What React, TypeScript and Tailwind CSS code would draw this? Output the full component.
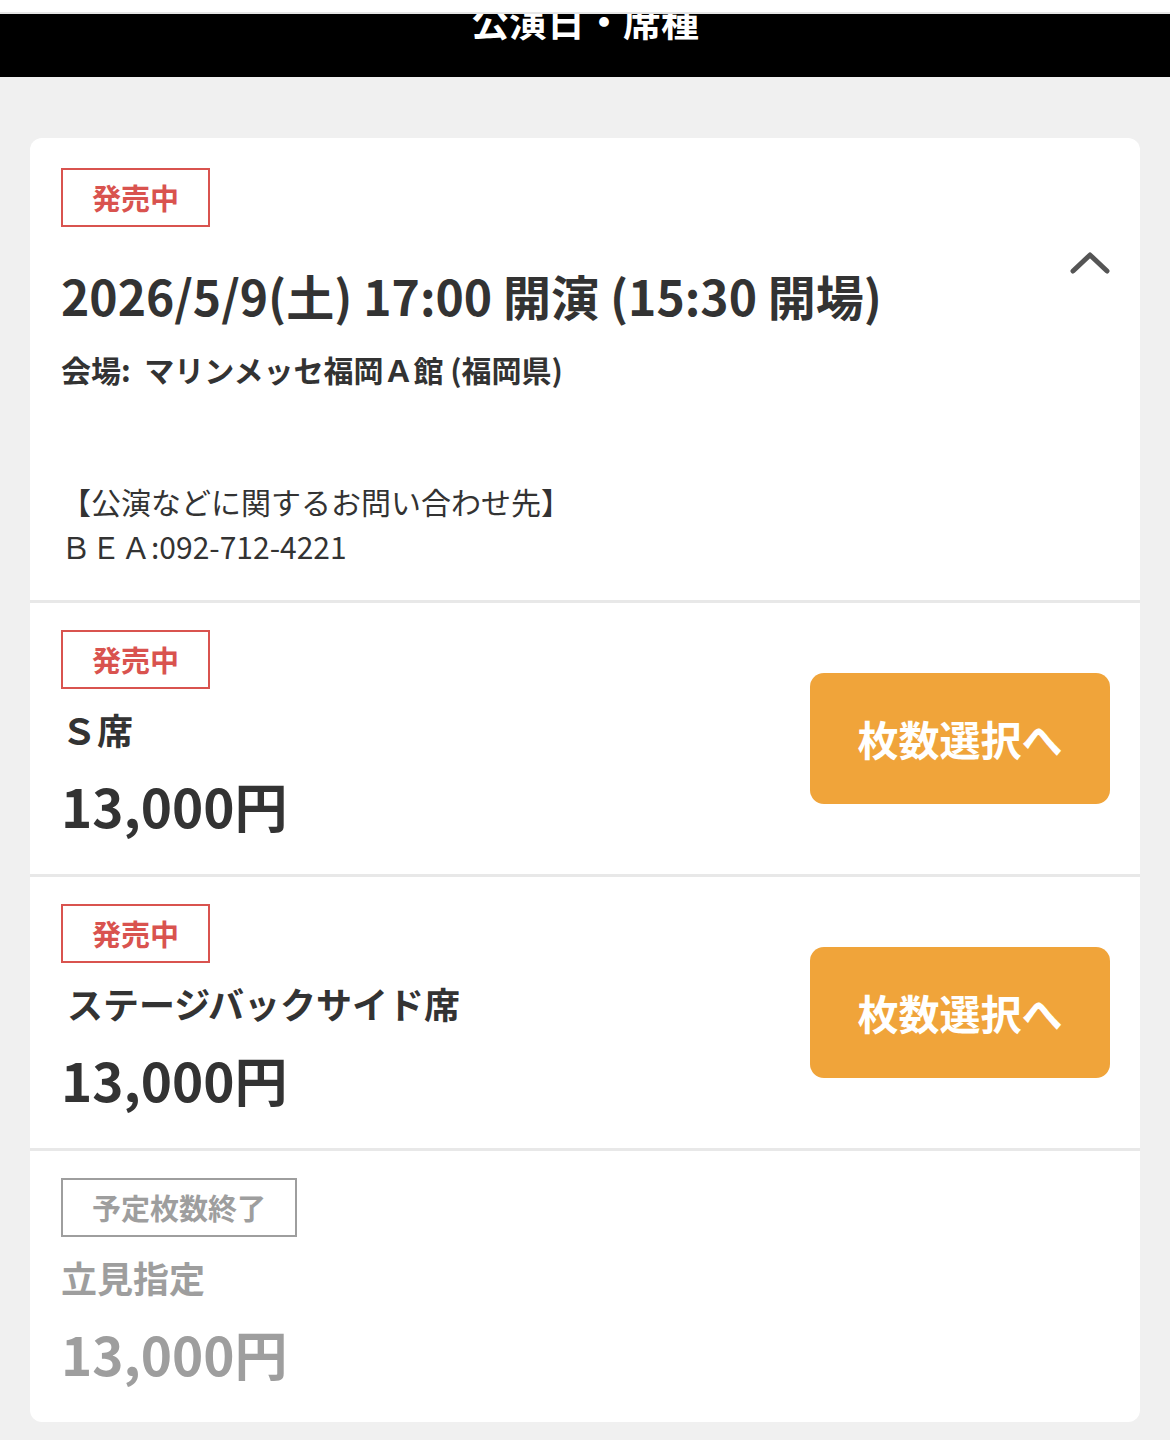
import React from "react"

const font = { fontFamily: '"Noto Sans CJK JP", "Noto Sans", sans-serif' }

function Badge({ label, soldOut }: { label: string; soldOut?: boolean }) {
  return (
    <div
      className={`inline-flex h-[59px] items-center border-2 px-[29px] text-[29px] font-bold leading-none ${
        soldOut ? "border-[#9e9e9e] text-[#9e9e9e]" : "border-[#d9534f] text-[#d9534f]"
      }`}
    >
      {label}
    </div>
  )
}

function SeatRow({
  name,
  price,
  soldOut,
  indent,
}: {
  name: string
  price: string
  soldOut?: boolean
  indent?: boolean
}) {
  return (
    <div className="flex h-[274px] items-center justify-between border-t-[3px] border-[#e8e8e8] pl-[31px] pr-[30px]">
      <div className="flex h-full flex-col pt-[27px]">
        <div>
          <Badge label={soldOut ? "予定枚数終了" : "発売中"} soldOut={soldOut} />
        </div>
        <div
          className={`mt-[17px] h-[46px] text-[36px] font-bold leading-[46px] ${
            soldOut ? "text-[#9e9e9e]" : "text-[#333333]"
          } ${indent ? "pl-[6px]" : ""}`}
        >
          {name}
        </div>
        <div
          className={`mt-[23px] h-[60px] text-[53px] font-bold leading-[60px] ${
            soldOut ? "text-[#9e9e9e]" : "text-[#333333]"
          }`}
        >
          {price}
        </div>
      </div>
      {!soldOut && (
        <button className="flex h-[131px] w-[300px] items-center justify-center rounded-[14px] bg-[#f0a43a] text-[41px] font-bold text-white">
          枚数選択へ
        </button>
      )}
    </div>
  )
}

export default function App() {
  return (
    <div className="min-h-[1440px] bg-[#f0f0f0]" style={font}>
      <div className="h-[12px] bg-white" />
      <div className="h-[2px] bg-[#e6e6e6]" />
      <div className="h-[63px] overflow-hidden bg-black">
        <div className="-mt-[14px] text-center text-[38px] font-bold leading-[40px] text-white">
          公演日・席種
        </div>
      </div>

      <div className="px-[30px] pt-[61px] pb-[17px]">
        <div className="overflow-hidden rounded-[12px] bg-white">
          <div className="relative h-[462px] pl-[31px] pr-[30px] pt-[30px]">
            <Badge label="発売中" />
            <div className="mt-[38px] h-[60px] text-[48px] font-bold leading-[60px] text-[#333333]">
              2026/5/9(土) 17:00 開演 (15:30 開場)
            </div>
            <div className="mt-[24px] h-[40px] text-[30px] font-bold leading-[40px] text-[#333333]">
              会場:&nbsp; マリンメッセ福岡Ａ館 (福岡県)
            </div>
            <div className="mt-[90px] text-[30px] leading-[45px] text-[#333333]">
              <div>【公演などに関するお問い合わせ先】</div>
              <div>ＢＥＡ:092-712-4221</div>
            </div>
            <svg
              className="absolute right-[28px] top-[110px]"
              width="44"
              height="32"
              viewBox="0 0 44 32"
              fill="none"
            >
              <path
                d="M5 23 L22 7 L39 23"
                stroke="#555555"
                strokeWidth="5"
                strokeLinecap="round"
                strokeLinejoin="round"
              />
            </svg>
          </div>
          <SeatRow name="Ｓ席" price="13,000円" />
          <SeatRow name="ステージバックサイド席" price="13,000円" indent />
          <SeatRow name="立見指定" price="13,000円" soldOut />
        </div>
      </div>
    </div>
  )
}
